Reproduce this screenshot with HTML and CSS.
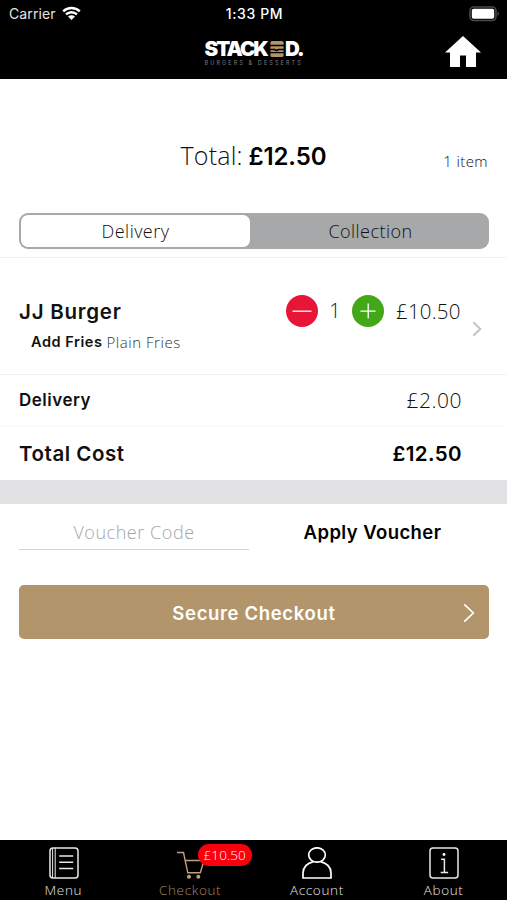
FILE: index.html
```
<!DOCTYPE html>
<html lang="en">
<head>
<meta charset="utf-8">
<title>Checkout</title>
<link rel="stylesheet" href="styles.css">
</head>
<body>
<div class="app">
  <header class="header">
    <div class="status">
      <div class="status-left"><span class="carrier">Carrier</span>
        <svg class="wifi" width="19" height="15" viewBox="0 0 19 15"><path d="M1.2 5.400a12 12 0 0 1 16.600 0M4 8.400a8 8 0 0 1 11 0" fill="none" stroke="#fff" stroke-width="2.400"/><path d="M9.500 14 6 10.600a5 5 0 0 1 7 0z" fill="#fff"/></svg>
      </div>
      <span class="clock">1:33 PM</span>
      <svg class="battery" width="32" height="16" viewBox="0 0 32 16"><rect x="1" y="1" width="26" height="13.5" rx="4" fill="none" stroke="#4a4a4a" stroke-width="1.6"/><rect x="2.8" y="2.8" width="22.4" height="10" rx="1.8" fill="#fff"/><path d="M28.6 5.2q2.6 2.4 0 5z" fill="#5a5a5a"/></svg>
    </div>
    <div class="brandbar">
      <div class="brand">
        <div class="wordmark"><span>STACK</span><svg class="burger" width="14" height="16" viewBox="0 0 14 17"><path d="M0 4V1.6Q0 0 2 0h10q2 0 2 1.6V4zM0 5.6h14v2.6H8l-1.5 1.2L5 8.2H0zM0 9.8h4l2.5 1.4L9 9.8h5v1.8H0zM0 13h14v2.4q0 1.6-2 1.6H2q-2 0-2-1.6z" fill="#b3956b"/></svg><span>D.</span></div>
        <div class="tagline">BURGERS &amp; DESSERTS</div>
      </div>
      <svg class="home" width="36" height="31" viewBox="0 0 36 31"><path d="M18 0 36 16.5H31V31H21V19.5H15V31H5V16.5H0z" fill="#fff"/></svg>
    </div>
  </header>

  <main class="main">
    <section class="summary">
      <h1 class="total">Total: <b>£12.50</b></h1>
      <span class="count">1 item</span>
    </section>
    <div class="segmented">
      <div class="segment active">Delivery</div>
      <div class="segment">Collection</div>
    </div>

    <section class="item">
      <div class="item-info">
        <div class="item-name">JJ Burger</div>
        <div class="item-extra"><b>Add Fries</b><span>Plain Fries</span></div>
      </div>
      <div class="item-controls">
        <svg width="32" height="32" viewBox="0 0 32 32"><circle cx="16" cy="16" r="16" fill="#e71638"/><path d="M6.5 16.2h19" stroke="#fff" stroke-width="1.3"/></svg>
        <span class="qty">1</span>
        <svg width="32" height="32" viewBox="0 0 32 32"><circle cx="16" cy="16" r="16" fill="#43a718"/><path d="M8.5 16.2h15M16.2 8.5v15" stroke="#fff" stroke-width="1.3"/></svg>
        <span class="price">£10.50</span>
      </div>
      <svg class="disclosure" width="10" height="16" viewBox="0 0 10 16"><path d="m1.3 1.2 7 6.8-7 6.8" fill="none" stroke="#c4c4c6" stroke-width="2"/></svg>
    </section>
    <div class="line delivery"><b>Delivery</b><span class="price">£2.00</span></div>
    <div class="line grand"><b>Total Cost</b><b class="grand-price">£12.50</b></div>
    <div class="divider"></div>

    <section class="voucher">
      <div class="voucher-input">Voucher Code</div>
      <div class="voucher-apply">Apply Voucher</div>
    </section>
    <div class="checkout"><span>Secure Checkout</span>
      <svg class="checkout-arrow" width="12" height="20" viewBox="0 0 12 20"><path d="m1.3 1.3 9 8.700-9 8.700" fill="none" stroke="#fff" stroke-width="1.7"/></svg>
    </div>
  </main>

  <nav class="tabs">
    <div class="tab">
      <svg width="30" height="32" viewBox="0 0 30 32" fill="none" stroke="#e8e8e8" stroke-width="1.5"><rect x="1" y="1" width="28" height="30" rx="3"/><path d="M3.600 1.500v29M6.200 1v30" stroke-width="1"/><path d="M10.200 9h14M10.200 15.200h14M10.200 21.400h14"/></svg>
      <span>Menu</span>
    </div>
    <div class="tab current">
      <svg width="30" height="32" viewBox="0 0 30 32" fill="none" stroke="#bfa27c" stroke-width="1.4"><path d="M1 5.500h6.500l4.300 20.300h12.500L28 13.500H9.400"/><circle cx="13" cy="29.700" r="1.300" fill="#bfa27c"/><circle cx="22.300" cy="29.700" r="1.300" fill="#bfa27c"/></svg>
      <span>Checkout</span>
      <span class="badge">£10.50</span>
    </div>
    <div class="tab">
      <svg width="30" height="32" viewBox="0 0 30 32" fill="none" stroke="#fff" stroke-width="1.7"><ellipse cx="15" cy="8" rx="8.3" ry="7.2"/><path d="M11.200 14.600C5 16.300 1 20.300 1 26v5h28v-5c0-5.700-4-9.700-10.200-11.400"/></svg>
      <span>Account</span>
    </div>
    <div class="tab">
      <svg width="30" height="32" viewBox="0 0 30 32" fill="none" stroke="#e8e8e8" stroke-width="1.5"><rect x="1" y="1" width="28" height="30" rx="3"/><path d="M12 12.200h3.400v13.300M11.700 25.600h7.400"/><circle cx="15" cy="7.500" r="1.400" fill="#fff" stroke="none"/></svg>
      <span>About</span>
    </div>
  </nav>
</div>
</body>
</html>
```
FILE: styles.css
```
* { box-sizing: border-box; }
body { margin: 0; background: #fff; color: #111; font-family: "Open Sans", sans-serif; font-weight: 300; }
b { font-family: Inter, sans-serif; font-weight: 600; }
svg { display: block; flex: none; }
.app { width: 507px; height: 900px; display: flex; flex-direction: column; overflow: hidden; }

.header { height: 79px; background: #000; color: #fff; }
.status { height: 28px; display: grid; grid-template-columns: 1fr auto 1fr; align-items: center; padding: 0 6px 1px 9px; font-family: Inter, sans-serif; font-size: 14px; }
.status-left { display: flex; align-items: center; gap: 6px; }
.carrier { font-weight: 400; color: #e4e4e4; letter-spacing: 0.1px; }
.wifi { margin-top: -1px; }
.clock { font-weight: 500; letter-spacing: 0.6px; margin-left: -1px; }
.battery { justify-self: end; }
.brandbar { height: 51px; display: grid; grid-template-columns: 1fr 98px 1fr; padding: 0 26px; }
.brand { grid-column: 2; padding-top: 11px; }
.wordmark { display: flex; align-items: center; height: 19px; font: 900 20.5px/19px Inter, sans-serif; letter-spacing: -1.9px; }
.burger { margin: 0 1px 0 3px; }
.tagline { margin-top: 1px; font: 400 5.5px/8px Inter, sans-serif; letter-spacing: 2.1px; white-space: nowrap; color: #7b7b7b; }
.home { justify-self: end; margin-top: 8px; }

.main { flex: 1; }
.summary { height: 134px; display: grid; grid-template-columns: 1fr auto 1fr; align-items: start; padding: 0 19px; }
.total { grid-column: 2; margin: 59px 0 0; font-size: 25px; line-height: 34px; font-weight: 300; letter-spacing: 0.2px; color: #111; }
.total b { font-size: 24px; letter-spacing: -0.1px; margin-left: -1px; color: #000; }
.count { justify-self: end; margin-top: 71px; font-size: 15px; line-height: 22px; letter-spacing: 0.4px; }
.segmented { height: 36px; margin: 0 18px 0 19px; padding: 2px; display: grid; grid-template-columns: 229px 1fr; background: #a6a8a9; border-radius: 9px; }
.segment { display: grid; place-items: center; font-size: 18px; line-height: 32px; letter-spacing: 0.45px; color: #111; }
.segment + .segment { padding-left: 4px; }
.segment.active { background: #fff; border-radius: 7px; }

.item { height: 118px; margin-top: 8px; border-top: 1px solid #f1f1f1; border-bottom: 1px solid #f1f1f1; padding: 0 25px 0 19px; display: flex; align-items: flex-start; }
.item-info { flex: 1; padding-top: 41px; }
.item-name { font: 600 20.5px/26px Inter, sans-serif; letter-spacing: 0.75px; }
.item-extra { display: flex; gap: 4px; padding-left: 12px; margin-top: 6px; font-size: 15px; line-height: 22px; }
.item-extra b { font-size: 14.5px; letter-spacing: 0.55px; }
.item-extra span { letter-spacing: 0.55px; color: #333; }
.item-controls { display: flex; align-items: center; height: 32px; margin-top: 37px; }
.qty { width: 34px; text-align: center; font-size: 20px; line-height: 28px; }
.price { font-size: 20.5px; line-height: 28px; letter-spacing: 0.2px; color: #111; }
.item-controls .price { width: 64px; margin-left: 12px; }
.disclosure { margin: 63px 0 0 12px; }
.line { display: flex; align-items: center; justify-content: space-between; padding: 0 45px 0 19px; }
.delivery { height: 52px; padding-bottom: 2px; border-bottom: 1px solid #f8f8f8; }
.delivery b { font-size: 17px; letter-spacing: 0.5px; }
.delivery .price { font-size: 21px; letter-spacing: 0.5px; }
.grand { height: 53px; font-size: 20.5px; }
.grand b { letter-spacing: 0.55px; }
.grand .grand-price { letter-spacing: 0.4px; color: #000; }
.divider { height: 24px; background: #e2e2e4; }

.voucher { display: grid; grid-template-columns: 230px 1fr; column-gap: 10px; padding: 0 19px; height: 81px; align-items: start; }
.voucher-input { height: 46px; padding-top: 15px; border-bottom: 1px solid #d3d3d5; text-align: center; font-size: 18px; line-height: 26px; letter-spacing: 0.55px; color: #a6a6a8; }
.voucher-apply { padding: 15px 2px 0 0; text-align: center; font: 600 18.5px/26px Inter, sans-serif; letter-spacing: 0.42px; color: #000; }
.checkout { height: 54px; margin: 0 18px 0 19px; padding: 1px 14px 0; border-radius: 5px; background: #b3956b; display: grid; grid-template-columns: 1fr auto 1fr; align-items: center; color: #fff; font: 600 18.5px/26px Inter, sans-serif; letter-spacing: 0.65px; }
.checkout span { grid-column: 2; margin-top: 1px; }
.checkout-arrow { justify-self: end; }

.tabs { height: 60px; background: #000; color: #e4e4e4; display: grid; grid-template-columns: repeat(4, 1fr); }
.tab { position: relative; display: flex; flex-direction: column; align-items: center; padding-top: 7px; font-size: 13.5px; line-height: 18px; letter-spacing: 0.65px; }
.tab > svg { margin: 0 0 2px 1px; }
.current { color: #a18760; }
.badge { position: absolute; left: 71px; top: 4px; width: 54px; height: 22px; border-radius: 11px; background: #f8000c; color: #fff; text-align: center; line-height: 22px; letter-spacing: 0.1px; }
```
